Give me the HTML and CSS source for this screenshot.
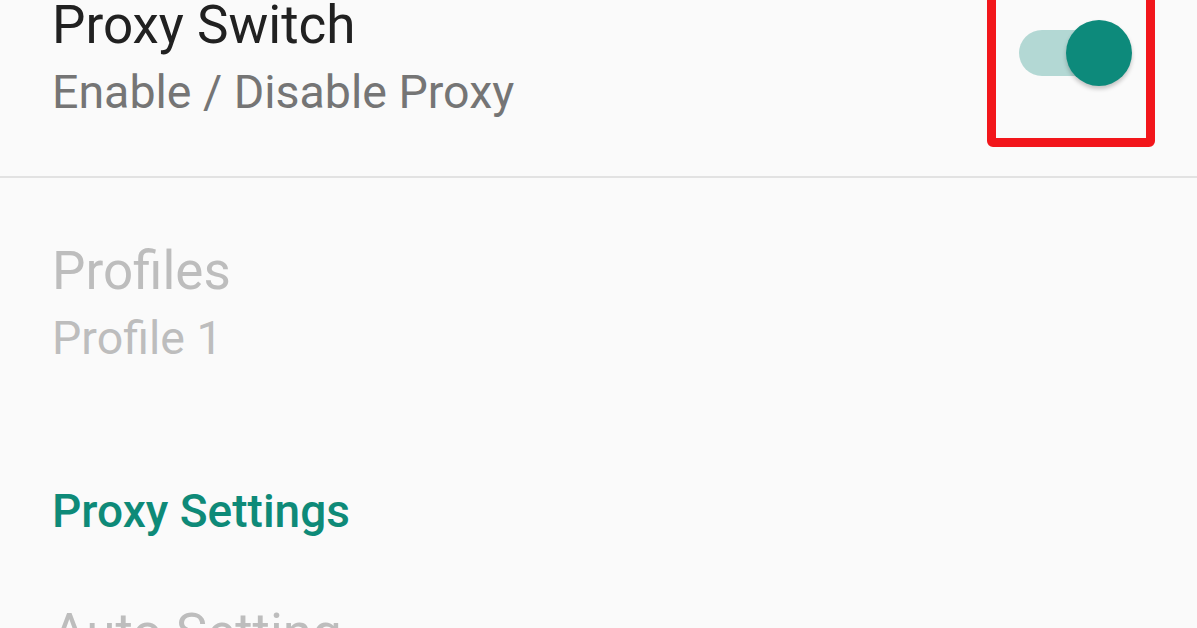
FILE: index.html
```html
<!DOCTYPE html>
<html>
<head>
<meta charset="utf-8">
<link rel="stylesheet" href="styles.css">
</head>
<body>
<div class="page">
  <div class="pref pref-switch">
    <div class="texts">
      <div class="title">Proxy Switch</div>
      <div class="summary">Enable / Disable Proxy</div>
    </div>
    <div class="switch">
      <span class="track"></span>
      <span class="thumb"></span>
    </div>
  </div>
  <div class="divider"></div>
  <div class="pref pref-disabled">
    <div class="texts">
      <div class="title">Profiles</div>
      <div class="summary">Profile 1</div>
    </div>
  </div>
  <div class="category">Proxy Settings</div>
  <div class="pref pref-disabled pref-last">
    <div class="texts">
      <div class="title">Auto Setting</div>
    </div>
  </div>
  <div class="highlight"></div>
</div>
</body>
</html>
```

FILE: styles.css
```css
html, body {
  margin: 0;
  padding: 0;
  background: #fafafa;
  overflow: hidden;
}
.page {
  position: relative;
  width: 1197px;
  height: 628px;
  overflow: hidden;
  font-family: Roboto, "Noto Sans", sans-serif;
}
.pref {
  display: flex;
  align-items: flex-start;
  padding-left: 52px;
  padding-right: 65px;
}
.texts {
  flex: 1;
  display: flex;
  flex-direction: column;
  gap: 8px;
}
.title {
  font-size: 53px;
  line-height: 62px;
  color: #212121;
}
.summary {
  font-size: 46.5px;
  line-height: 56px;
  color: #757575;
}
.pref-switch {
  margin-top: -6px;
  padding-bottom: 56px;
}
.switch {
  position: relative;
  width: 113px;
  height: 66px;
  margin-top: 26px;
}
.track {
  position: absolute;
  left: 0;
  top: 10px;
  width: 112px;
  height: 46px;
  border-radius: 23px;
  background: #b3d8d4;
}
.thumb {
  position: absolute;
  right: 0;
  top: 0;
  width: 66px;
  height: 66px;
  border-radius: 50%;
  background: #0d8a7b;
  box-shadow: 0 3px 4px rgba(0, 0, 0, 0.22);
}
.divider {
  height: 2px;
  background: #e2e2e2;
}
.pref-disabled {
  padding-top: 62px;
}
.pref-disabled .title,
.pref-disabled .summary {
  color: #bdbdbd;
}
.category {
  padding-left: 52px;
  margin-top: 117px;
  font-size: 46px;
  line-height: 56px;
  font-weight: 500;
  color: #0e8a78;
}
.pref-last {
  padding-top: 63px;
}
.highlight {
  position: absolute;
  left: 987px;
  top: -20px;
  width: 168px;
  height: 167px;
  box-sizing: border-box;
  border: 9px solid #f2161b;
  border-radius: 6px;
}
```
